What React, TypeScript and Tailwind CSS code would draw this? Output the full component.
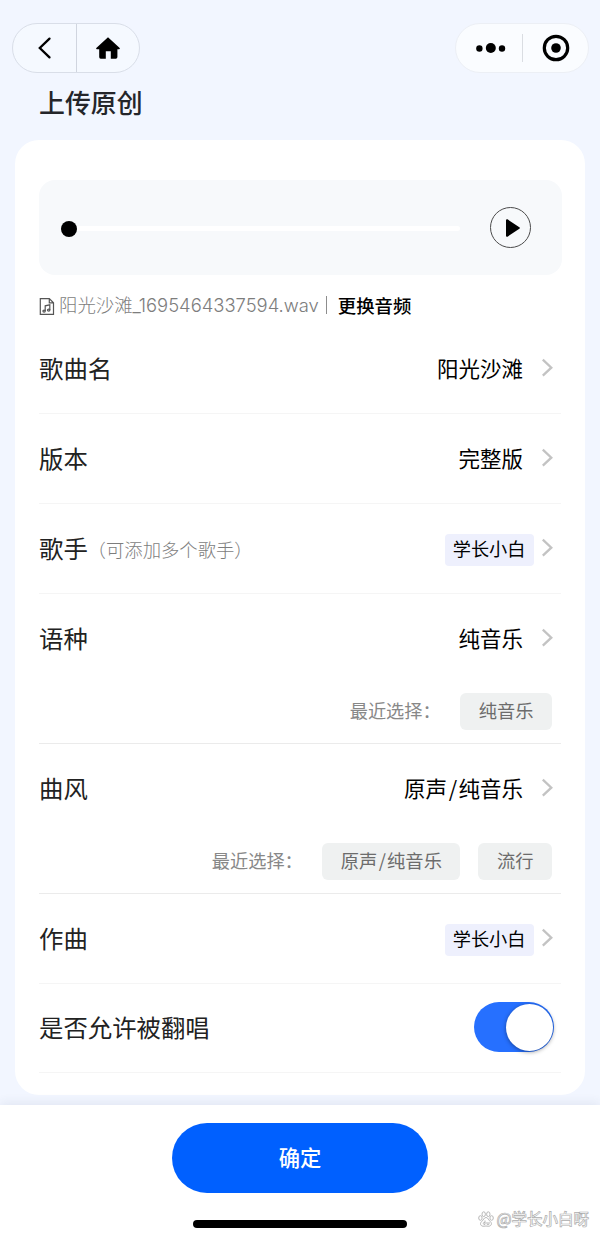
import type { ReactNode } from "react";

function Chevron() {
  return (
    <svg className="ml-[18px] h-5 w-[13px] shrink-0" viewBox="0 0 13 20" fill="none">
      <path d="M1.8 1.7 L10.3 9.7 L1.8 17.7" stroke="#c3c3c3" strokeWidth="2.3" />
    </svg>
  );
}

function Slashed({ text }: { text: string }) {
  const [first, second] = text.split("/");
  if (!second) return <>{text}</>;
  return (
    <>
      {first}
      <span className="mr-[0.06em] ml-[0.08em]">/</span>
      {second}
    </>
  );
}

function Row({
  label,
  hint,
  value,
  tag,
  recent,
}: {
  label: string;
  hint?: string;
  value?: string;
  tag?: string;
  recent?: string[];
}) {
  return (
    <div className={recent ? "h-[150px] border-b border-[#ebebeb]" : "h-[90px] border-b border-[#f5f5f5]"}>
      <div className="flex h-[87px] items-center pr-[7px]">
        <span className="text-[24.4px] leading-9 text-[#222222]">{label}</span>
        {hint && <span className="ml-[9px] pt-[3px] text-[18.35px] leading-7 font-light text-[#7d7d7d] [font-feature-settings:'halt']">{hint}</span>}
        <div className="ml-auto flex items-center">
          {value && (
            <span className="pt-px text-[21.5px] leading-8 text-black">
              <Slashed text={value} />
            </span>
          )}
          {tag && (
            <span className="-mr-[11px] mt-[5px] flex h-8 items-center rounded-[4px] bg-[#eef0fd] pr-[8.5px] pl-[7.5px] text-[18.2px] text-black">
              <span className="-mt-[2px]">{tag}</span>
            </span>
          )}
          <Chevron />
        </div>
      </div>
      {recent && (
        <div className="mt-3 flex items-center justify-end pr-[9px]">
          <span className="-mt-[3px] flex text-[18.2px] leading-7 text-[#888888]">
            <span>最近选择</span>
            <span>：</span>
          </span>
          <div className="ml-[19.5px] flex gap-[18px]">
            {recent.map((name) => (
              <span key={name} className="flex h-[37px] items-center rounded-[6px] bg-[#eff1f1] px-[18.5px] text-[18.3px] text-[#6c6c6c]">
                <span className="-mt-px">
                  <Slashed text={name} />
                </span>
              </span>
            ))}
          </div>
        </div>
      )}
    </div>
  );
}

function Capsule({ children, className }: { children: ReactNode; className: string }) {
  return <div className={`flex h-[50px] items-center rounded-full border ${className}`}>{children}</div>;
}

export default function App() {
  return (
    <div className="flex h-[1240px] w-[600px] flex-col overflow-hidden bg-[#f2f6ff] font-['Noto_Sans_CJK_SC',sans-serif]">
      <header className="flex h-[140px] flex-col pt-[23px]">
        <div className="flex justify-between pr-[11px] pl-3">
          <Capsule className="w-[128px] border-[#d9dee8] bg-[#f5f9ff]">
            <div className="flex h-full w-[64px] items-center justify-center border-r border-[#d0d5df]">
              <svg className="h-6 w-6" viewBox="0 0 24 24" fill="none">
                <path d="M16.5 2.6 L6.8 12 L16.5 21.4" stroke="#000" strokeWidth="2.3" strokeLinecap="round" />
              </svg>
            </div>
            <div className="flex flex-1 items-center justify-center">
              <svg className="h-[26px] w-[26px]" viewBox="0 0 26 26">
                <path
                  d="M13 2.3 L24.7 13 Q25.3 14.3 24 14.3 H22.4 V22 Q22.4 23.8 20.8 23.8 H15.8 V16.3 H10.8 V23.8 H5.7 Q4.2 23.8 4.2 22 V14.3 H2 Q.7 14.3 1.3 13 Z"
                  fill="#000"
                />
              </svg>
            </div>
          </Capsule>
          <Capsule className="w-[134px] border-[#eceff5] bg-[#fafcff]">
            <svg className="ml-[19px] h-4 w-8" viewBox="0 0 32 16">
              <circle cx="4.4" cy="8.5" r="3.2" />
              <circle cx="15.8" cy="8" r="5" />
              <circle cx="27" cy="8.5" r="3.2" />
            </svg>
            <div className="ml-[15px] h-7 w-px bg-[#dadde2]" />
            <svg className="ml-[19px] h-7 w-7" viewBox="0 0 28 28">
              <circle cx="14" cy="14" r="11.7" fill="none" stroke="#000" strokeWidth="3.2" />
              <circle cx="14" cy="14" r="4.8" />
            </svg>
          </Capsule>
        </div>
        <h1 className="mt-[10px] ml-[39px] text-[25.9px] leading-[38px] font-medium text-[#24252a]">上传原创</h1>
      </header>

      <main className="mx-[15px] h-[955px] shrink-0 rounded-[24px] bg-white px-6 pt-10">
        <div className="-mr-px flex h-[95px] items-center rounded-[16px] bg-[#f7f9fb] pr-[31px] pl-[22px]">
          <div className="mt-[2px] h-4 w-4 shrink-0 rounded-full bg-black" />
          <div className="mt-px h-[5px] w-[383px] rounded-r-full bg-white" />
          <div className="ml-auto flex h-[41px] w-[41px] items-center justify-center rounded-full border border-[#4b4b4b]">
            <svg className="ml-1 h-5 w-4" viewBox="0 0 16 20">
              <path d="M2 2.2 L13.8 10 L2 17.8 Z" stroke="#000" strokeWidth="2" strokeLinejoin="round" />
            </svg>
          </div>
        </div>

        <div className="flex h-[49px] items-center pt-[10px] text-[18.4px] leading-7">
          <svg className="mt-[3px] h-[19px] w-4 shrink-0" viewBox="0 0 16 19" fill="none" stroke="#555" strokeWidth="1.2">
            <path d="M1.3 1.6 H10.3 L14.5 5.8 V17.4 H1.3 Z M10.3 1.6 V5.8 H14.5" />
            <path d="M6.2 14 V8.8 L10.8 7.8 V13" />
            <ellipse cx="5.1" cy="14.1" rx="1.2" ry="1" />
            <ellipse cx="9.7" cy="13.1" rx="1.2" ry="1" />
          </svg>
          <span className="ml-1 font-['Inter','Noto_Sans_CJK_SC',sans-serif] font-light whitespace-nowrap text-[#7d7d7d]">阳光沙滩_1695464337594.wav</span>
          <span className="ml-[7px] h-[18px] w-px bg-[#8d8d8d]" />
          <span className="ml-[11px] font-medium text-black">更换音频</span>
        </div>

        <Row label="歌曲名" value="阳光沙滩" />
        <Row label="版本" value="完整版" />
        <Row label="歌手" hint="（可添加多个歌手）" tag="学长小白" />
        <Row label="语种" value="纯音乐" recent={["纯音乐"]} />
        <Row label="曲风" value="原声/纯音乐" recent={["原声/纯音乐", "流行"]} />
        <Row label="作曲" tag="学长小白" />
        <div className="flex h-[89px] items-center justify-between border-b border-[#f5f5f5] pr-[7px] pb-[2px]">
          <span className="text-[24.4px] leading-9 text-[#222222]">是否允许被翻唱</span>
          <button className="flex h-[50px] w-20 items-center justify-end rounded-full bg-[#2670ff] pr-px">
            <span className="h-[47px] w-[47px] rounded-full bg-white shadow-[0_1px_4px_rgba(0,0,0,0.4)]" />
          </button>
        </div>
      </main>

      <footer className="mt-[10px] flex h-[135px] shrink-0 flex-col items-center bg-white pt-[18px] shadow-[0_-2px_10px_rgba(60,70,110,0.09)]">
        <button className="h-[70px] w-[256px] rounded-full bg-[#0060ff] pb-[2px] text-[21.3px] font-medium text-white">确定</button>
        <div className="mt-[27px] h-2 w-[214px] shrink-0 rounded-full bg-black" />
        <div className="-mt-[22px] mr-[11px] flex shrink-0 items-center self-end">
          <svg className="mt-[2px] mr-[2px] h-4 w-4" viewBox="0 0 16 16" fill="#fff" stroke="#b0b0b0" strokeWidth=".9">
            <ellipse cx="2.4" cy="7" rx="1.7" ry="2.3" />
            <ellipse cx="5.7" cy="3.2" rx="1.7" ry="2.4" />
            <ellipse cx="10.3" cy="3.2" rx="1.7" ry="2.4" />
            <ellipse cx="13.6" cy="7" rx="1.7" ry="2.3" />
            <path d="M8 6.5 C10 6.5 10.5 9 12.2 10.4 C15 13 12.5 15.6 10 15.2 Q8 14.8 6 15.2 C3.2 15.6 1 13 3.8 10.4 C5.5 9 6 6.5 8 6.5 Z" />
            <path d="M7 9.5 V13.4 H5.8 Q4.8 12.5 5.8 11.4 H7 M9 11 V13.3 H11 V11" />
          </svg>
          <span className="text-[15.5px] leading-6 font-medium whitespace-nowrap text-white [-webkit-text-stroke:0.7px_#adadad]">@学长小白呀</span>
        </div>
      </footer>
    </div>
  );
}
